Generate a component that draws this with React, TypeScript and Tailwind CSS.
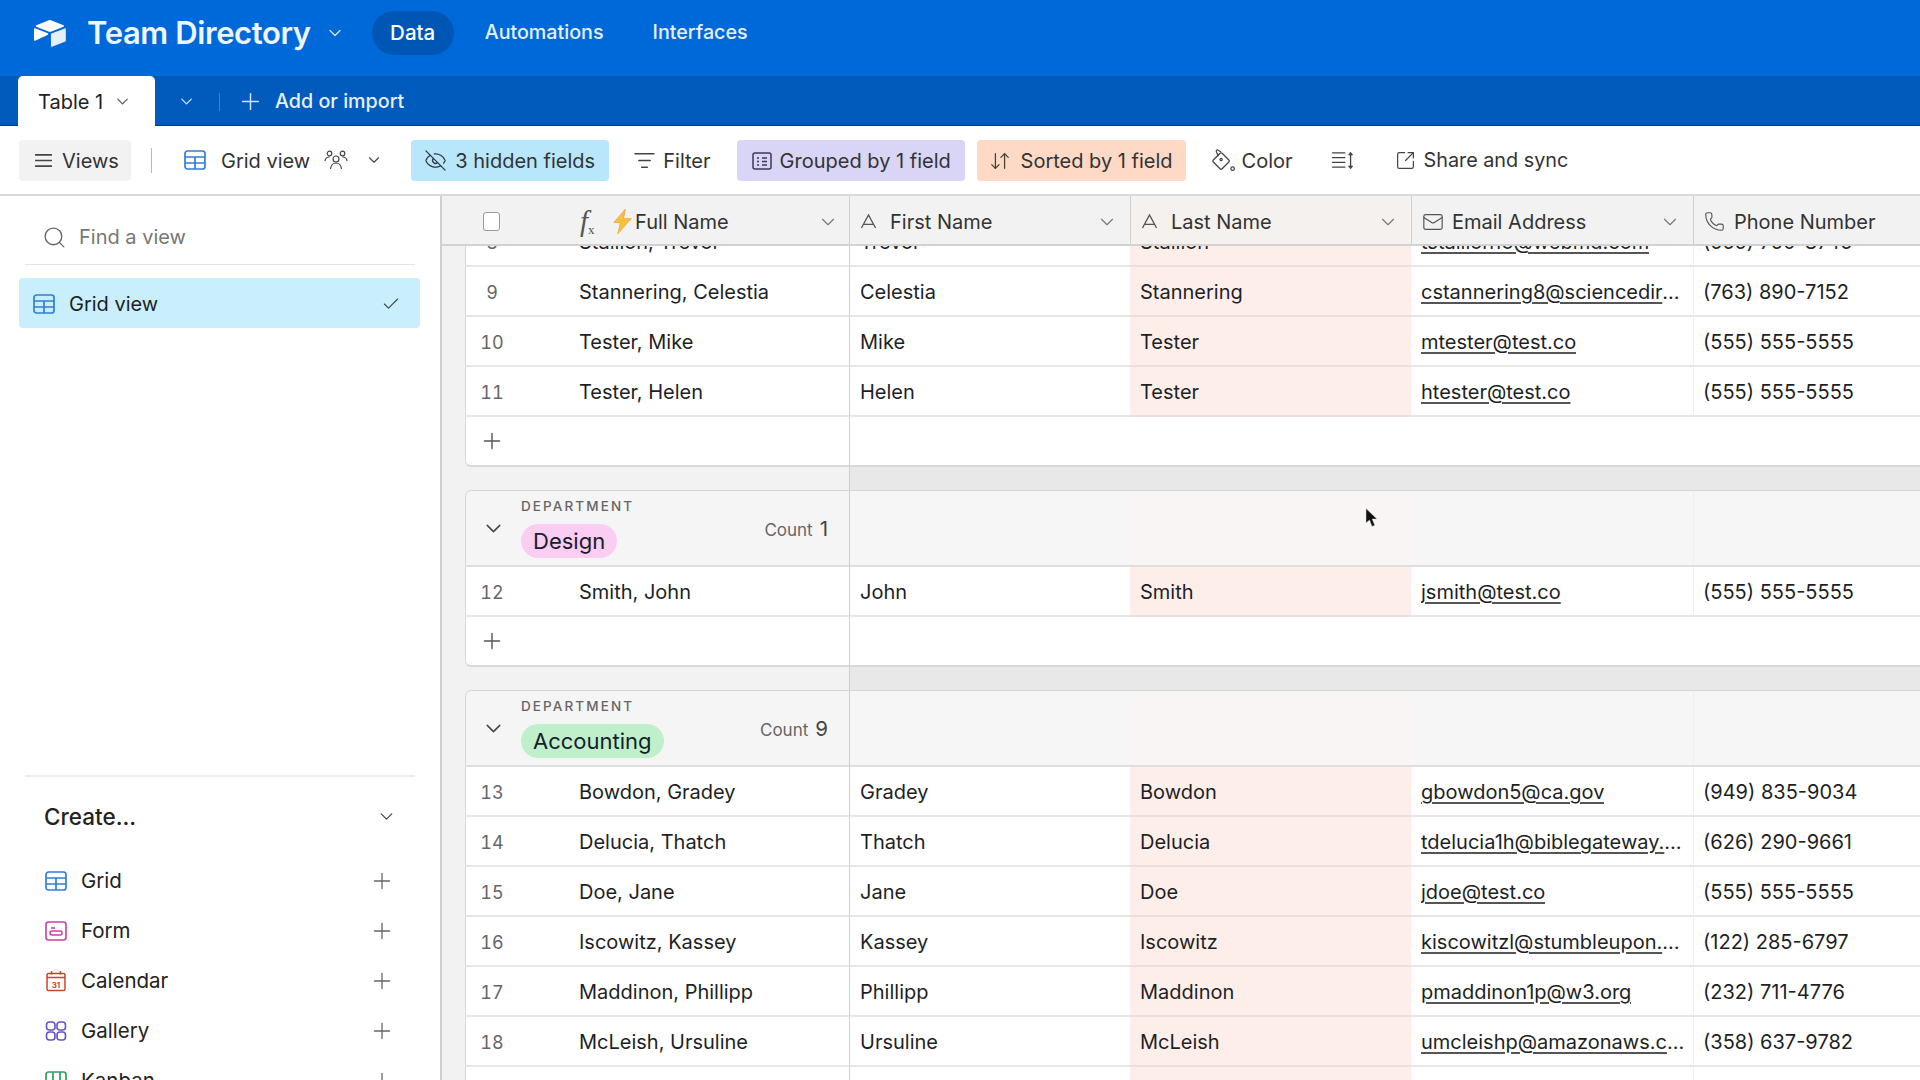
import React from "react";
import { ChevronDown, Search, Check, Plus, Mail, Phone, ArrowDownUp, SquareArrowOutUpRight, ListFilter, EyeOff } from "lucide-react";

const Logo = () => (
  <svg viewBox="0 0 200 170" className="w-[36px] h-[31px]" fill="#fff">
    <path d="M90.039 12.368 24.079 39.66c-3.667 1.519-3.63 6.729.062 8.192l66.235 26.266a24.58 24.58 0 0 0 18.12 0l66.236-26.266c3.69-1.463 3.729-6.673.062-8.192l-65.96-27.292a24.58 24.58 0 0 0-18.795 0" />
    <path d="M105.312 88.46v65.617c0 3.12 3.147 5.258 6.048 4.108l73.806-28.648a4.42 4.42 0 0 0 2.79-4.108V60.813c0-3.121-3.147-5.258-6.048-4.108l-73.806 28.648a4.42 4.42 0 0 0-2.79 4.108" fillOpacity="0.9" />
    <path d="M88.078 91.846l-21.904 10.576-2.224 1.075-46.238 22.155c-2.93 1.414-6.672-.722-6.672-3.978V60.088c0-1.178.604-2.195 1.414-2.96a5 5 0 0 1 1.12-.84c1.104-.663 2.68-.84 4.02-.31l70.117 27.78c3.564 1.414 3.844 6.408.368 8.087" />
  </svg>
);

const GridIcon = ({ className = "w-[22px] h-[20px]", color = "#2f7fd6" }: { className?: string; color?: string }) => (
  <svg viewBox="0 0 22 20" className={className} fill="none" stroke={color} strokeWidth="1.7">
    <rect x="1" y="1" width="20" height="18" rx="2.5" />
    <path d="M1 7h20M1 13h20M11 7v12" />
  </svg>
);

const FormIcon = () => (
  <svg viewBox="0 0 22 20" className="w-[22px] h-[20px]" fill="none" stroke="#cf3f9f" strokeWidth="1.6">
    <rect x="1" y="1" width="20" height="18" rx="2.5" />
    <path d="M6 7h4" />
    <rect x="5" y="10" width="12" height="4" rx="2" />
  </svg>
);

const CalendarIcon = () => (
  <svg viewBox="0 0 22 22" className="w-[22px] h-[22px]" fill="none" stroke="#c9442e" strokeWidth="1.5">
    <rect x="2" y="3.5" width="18" height="17" rx="1.5" />
    <path d="M2 7.5h18M6.5 1v3.5M15.5 1v3.5" />
    <text x="11" y="17.5" fontSize="8" fontWeight="700" textAnchor="middle" fill="#c9442e" stroke="none" fontFamily="Inter, sans-serif">31</text>
  </svg>
);

const GalleryIcon = () => (
  <svg viewBox="0 0 22 20" className="w-[22px] h-[20px]" fill="none" stroke="#6a4fc9" strokeWidth="1.6">
    <rect x="1.5" y="1" width="8.5" height="8" rx="3" />
    <rect x="12" y="1" width="8.5" height="8" rx="3" />
    <rect x="1.5" y="11" width="8.5" height="8" rx="3" />
    <rect x="12" y="11" width="8.5" height="8" rx="3" />
  </svg>
);

const KanbanIcon = () => (
  <svg viewBox="0 0 22 20" className="w-[22px] h-[20px]" fill="none" stroke="#2f9e5a" strokeWidth="1.7">
    <rect x="1" y="1" width="20" height="18" rx="2.5" />
    <path d="M8 1v10a2 2 0 0 1-4 0M15 1v8" />
  </svg>
);

const MenuIcon = () => (
  <svg viewBox="0 0 20 16" className="w-[19px] h-[15px]" fill="none" stroke="#444" strokeWidth="1.7">
    <path d="M1 2h18M1 8h18M1 14h18" />
  </svg>
);

const PeopleIcon = () => (
  <svg viewBox="0 0 24 22" className="w-[24px] h-[22px]" fill="none" stroke="#444" strokeWidth="1.2">
    <circle cx="12" cy="10" r="3" />
    <path d="M6.5 20c.5-4 2.5-6 5.5-6s5 2 5.500 6" />
    <circle cx="5.500" cy="4.500" r="2.300" />
    <circle cx="18.500" cy="4.500" r="2.300" />
    <path d="M1 12c.3-2.500 2-4 4.500-4M23 12c-.3-2.500-2-4-4.500-4" />
  </svg>
);

const GroupIcon = () => (
  <svg viewBox="0 0 20 18" className="w-[20px] h-[18px]" fill="none" stroke="#3c3a55" strokeWidth="1.5">
    <rect x="1" y="1" width="18" height="16" rx="2" />
    <path d="M5 6h2M10 6h5M5 9.500h2M10 9.500h5M5 13h2M10 13h5" />
  </svg>
);

const RowHeightIcon = () => (
  <svg viewBox="0 0 24 20" className="w-[23px] h-[19px]" fill="none" stroke="#444" strokeWidth="1.4">
    <path d="M1 2h14M1 7h14M1 12h14M1 17h14M20.500 2v16M18.500 4.500l2-2.500 2 2.500M18.500 15.500l2 2.500 2-2.500" />
  </svg>
);

const ColorIcon = () => (
  <svg viewBox="0 0 26 24" className="w-[25px] h-[23px]" fill="none" stroke="#444" strokeWidth="1.3">
    <rect x="4" y="6" width="13" height="13" rx="1.500" transform="rotate(45 10.500 12.500)" />
    <path d="M7.500 7.500 5.500 2.500c-.3-1 .6-1.800 1.500-1.400l3.500 2" />
    <circle cx="10.500" cy="11" r="1.200" />
    <circle cx="22.500" cy="20.500" r="1.800" />
  </svg>
);

const TextFieldIcon = () => (
  <svg viewBox="0 0 18 16" className="w-[17px] h-[15px]" fill="none" stroke="#555" strokeWidth="1.4">
    <path d="M1.500 15 9 1l7.500 14M4 11h10" />
  </svg>
);

const Bolt = () => (
  <svg viewBox="0 0 20 26" className="w-[19px] h-[25px]">
    <path d="M13 0 1 14h7L5 26 19 10h-8z" fill="#f6c33b" stroke="#ef9a3c" strokeWidth="0.8" />
  </svg>
);

const Cursor = () => (
  <svg viewBox="0 0 13 20" className="w-[13px] h-[20px]">
    <path d="M1 0.500V15l3.500-3 2.500 6.500 2.800-1.200L7.200 11H12z" fill="#111" stroke="#ddd" strokeWidth="0.5" />
  </svg>
);

const TopBar = () => (
  <div className="h-[76px] shrink-0 bg-[#0069d9] flex items-center pl-[32px] pb-[10px] text-white">
    <Logo />
    <span className="ml-[19px] text-[31px] font-semibold tracking-[-0.4px] text-[#eef5ff]">Team Directory</span>
    <ChevronDown className="ml-[14px] w-[20px] h-[20px] text-[#cfe3fa]" strokeWidth={1.6} />
    <div className="ml-[27px] w-[82px] h-[44px] rounded-full bg-[#0056b4] flex items-center justify-center text-[20.500px] font-medium">Data</div>
    <span className="ml-[31px] text-[19.700px] font-medium text-[#e6f0fc]">Automations</span>
    <span className="ml-[49px] text-[19.700px] font-medium text-[#e6f0fc]">Interfaces</span>
  </div>
);

const TabBar = () => (
  <div className="h-[50px] shrink-0 bg-[#005bbd] border-b border-[#00388a] flex items-stretch pl-[18px] text-white">
    <div className="w-[137px] h-[50px] bg-white rounded-t-[5px] flex items-center pl-[20px] pt-[1px] text-[#222] text-[20px]">
      <span>Table 1</span>
      <ChevronDown className="ml-[10px] w-[19px] h-[19px] text-[#555]" strokeWidth={1.5} />
    </div>
    <div className="flex items-center pt-[2px]">
      <ChevronDown className="ml-[22px] w-[19px] h-[19px] text-[#d4e6fa]" strokeWidth={1.6} />
      <div className="ml-[23px] w-px h-[18px] bg-[#3d82cf]" />
      <Plus className="ml-[17px] w-[27px] h-[27px] text-[#cfe3fa]" strokeWidth={1.3} />
      <span className="ml-[11px] text-[19.700px] font-medium text-[#e6f0fc]">Add or import</span>
    </div>
  </div>
);

const Toolbar = () => (
  <div className="h-[70px] shrink-0 bg-white border-b-2 border-[#d8d8d8] flex items-center pl-[19px] text-[20px] text-[#333]">
    <div className="w-[112px] h-[41px] bg-[#f2f2f2] rounded-[4px] flex items-center pl-[15px] pt-[1px]">
      <MenuIcon />
      <span className="ml-[9px]">Views</span>
    </div>
    <div className="ml-[20px] w-[1px] h-[25px] bg-[#bbb]" />
    <div className="ml-[32px]"><GridIcon /></div>
    <span className="ml-[15px] pt-[1px]">Grid view</span>
    <div className="ml-[14px]"><PeopleIcon /></div>
    <ChevronDown className="ml-[17px] w-[18px] h-[18px] text-[#444]" strokeWidth={1.5} />
    <div className="ml-[28px] w-[198px] h-[41px] bg-[#b8e6fb] rounded-[4px] flex items-center pl-[13px] pt-[1px]">
      <EyeOff className="w-[23px] h-[23px] text-[#334]" strokeWidth={1.3} />
      <span className="ml-[8px]">3 hidden fields</span>
    </div>
    <ListFilter className="ml-[24px] w-[23px] h-[23px] text-[#444]" strokeWidth={1.4} />
    <span className="ml-[7px] pt-[1px]">Filter</span>
    <div className="ml-[26px] w-[228px] h-[41px] bg-[#d9d5f7] rounded-[4px] flex items-center pl-[15px] pt-[1px]">
      <GroupIcon />
      <span className="ml-[8px]">Grouped by 1 field</span>
    </div>
    <div className="ml-[12px] w-[209px] h-[41px] bg-[#fdd9c6] rounded-[4px] flex items-center pl-[12px] pt-[1px]">
      <ArrowDownUp className="w-[22px] h-[22px] text-[#443]" strokeWidth={1.4} />
      <span className="ml-[10px]">Sorted by 1 field</span>
    </div>
    <div className="ml-[25px]"><ColorIcon /></div>
    <span className="ml-[6px] pt-[1px]">Color</span>
    <div className="ml-[38px]"><RowHeightIcon /></div>
    <SquareArrowOutUpRight className="ml-[41px] w-[21px] h-[21px] text-[#444]" strokeWidth={1.4} />
    <span className="ml-[8px] pt-[1px] text-[19.800px]">Share and sync</span>
  </div>
);

const createItems: { label: string; icon: React.ReactNode }[] = [
  { label: "Grid", icon: <GridIcon /> },
  { label: "Form", icon: <FormIcon /> },
  { label: "Calendar", icon: <CalendarIcon /> },
  { label: "Gallery", icon: <GalleryIcon /> },
  { label: "Kanban", icon: <KanbanIcon /> },
];

const Sidebar = () => (
  <div className="w-[442px] shrink-0 bg-white border-r-2 border-[#cfcfcf] flex flex-col overflow-hidden">
    <div className="h-[69px] shrink-0 mx-[25px] border-b border-[#e4e4e4] flex items-center pl-[17px] pt-[14px]">
      <Search className="w-[25px] h-[25px] text-[#666]" strokeWidth={1.3} />
      <span className="ml-[12px] text-[20px] text-[#777]">Find a view</span>
    </div>
    <div className="mt-[13px] ml-[19px] w-[401px] h-[50px] shrink-0 bg-[#c9eefc] rounded-[4px] flex items-center pl-[14px] pt-[1px]">
      <GridIcon />
      <span className="ml-[14px] text-[20px] text-[#1d1f25]">Grid view</span>
      <Check className="ml-auto mr-[19px] w-[20px] h-[20px] text-[#444]" strokeWidth={1.3} />
    </div>
    <div className="mt-[447px] mx-[25px] shrink-0 h-[2px] bg-[#ececec]" />
    <div className="h-[79px] shrink-0 flex items-center pl-[44px] pr-[43px]">
      <span className="text-[22.500px] font-medium text-[#222]">Create...</span>
      <ChevronDown className="ml-auto w-[21px] h-[21px] text-[#444]" strokeWidth={1.4} />
    </div>
    <div className="flex flex-col">
      {createItems.map((it) => (
        <div key={it.label} className="h-[50px] shrink-0 flex items-center pl-[45px] pr-[45px]">
          <div className="w-[22px] flex justify-center">{it.icon}</div>
          <span className="ml-[14px] text-[20.500px] text-[#222]">{it.label}</span>
          <Plus className="ml-auto w-[26px] h-[26px] text-[#666]" strokeWidth={1.2} />
        </div>
      ))}
    </div>
  </div>
);

const HeaderCol = ({ icon, label, chevron = true, className = "" }: { icon: React.ReactNode; label: string; chevron?: boolean; className?: string }) => (
  <div className={`h-full shrink-0 flex items-center pt-[3px] border-l border-[#cfcfcf] ${className}`}>
    <div className="w-[40px] pl-[10px] flex items-center">{icon}</div>
    <span className="text-[20px] text-[#333]">{label}</span>
    {chevron && <ChevronDown className="ml-auto mr-[12px] w-[22px] h-[22px] text-[#777]" strokeWidth={1.2} />}
  </div>
);

const GridHeader = () => (
  <div className="h-[50px] shrink-0 flex bg-[#f2f2f2] border-b-2 border-[#d2d2d2]">
    <div className="w-[407px] shrink-0 flex items-center pl-[41px] pt-[3px]">
      <div className="w-[17px] h-[19px] bg-white border border-[#999] rounded-[3px]" />
      <span className="ml-[80px] w-[24px] font-['Liberation_Serif',serif] italic text-[29px] leading-none text-[#555]">f<sub className="text-[13px] not-italic">x</sub></span>
      <div className="ml-[9px]"><Bolt /></div>
      <span className="ml-[3px] text-[20px] text-[#333]">Full Name</span>
      <ChevronDown className="ml-auto mr-[10px] w-[22px] h-[22px] text-[#777]" strokeWidth={1.2} />
    </div>
    <HeaderCol className="w-[281px]" icon={<TextFieldIcon />} label="First Name" />
    <HeaderCol className="w-[281px] bg-[#f5f1ef]" icon={<TextFieldIcon />} label="Last Name" />
    <HeaderCol className="w-[282px]" icon={<Mail className="w-[22px] h-[22px] text-[#555]" strokeWidth={1.3} />} label="Email Address" />
    <HeaderCol className="w-[300px]" icon={<Phone className="w-[21px] h-[21px] text-[#555]" strokeWidth={1.3} />} label="Phone Number" chevron={false} />
  </div>
);

type RowData = { n?: number; full?: string; first?: string; last?: string; email?: string; phone?: string };

const Row = ({ n, full, first, last, email, phone, className = "" }: RowData & { className?: string }) => (
  <div className={`h-[50px] shrink-0 flex text-[20px] text-[#1d1f25] ${className}`}>
    <div className="w-[384px] shrink-0 flex items-center pt-[2px] bg-white border-b-2 border-b-[#e6e6e6] border-l border-l-[#d8d8d8]">
      <span className="w-[52px] text-center text-[18px] tabular-nums text-[#666]">{n}</span>
      <span className="ml-[61px]">{full}</span>
    </div>
    <div className="w-[281px] shrink-0 flex items-center pl-[10px] pt-[2px] bg-white border-b-2 border-b-[#e6e6e6] border-l border-l-[#cfcfcf]">{first}</div>
    <div className="w-[281px] shrink-0 flex items-center pl-[10px] pt-[2px] bg-[#fdeeea] border-b-2 border-b-[#eadfdc]">{last}</div>
    <div className="w-[282px] shrink-0 flex items-center pl-[10px] pt-[2px] bg-white border-b-2 border-b-[#e6e6e6] overflow-hidden">
      <span className="truncate max-w-[266px] underline underline-offset-[3px] decoration-[#555]">{email}</span>
    </div>
    <div className="flex-1 flex items-center pl-[9px] pt-[1px] bg-white border-b-2 border-b-[#e6e6e6] border-l border-l-[#f0f0f0]">{phone}</div>
  </div>
);

const AddRow = () => (
  <div className="h-[50px] shrink-0 flex">
    <div className="w-[384px] shrink-0 flex items-center bg-white border-b-2 border-b-[#d8d8d8] border-l border-l-[#d8d8d8] rounded-bl-[6px]">
      <div className="w-[52px] flex justify-center"><Plus className="w-[26px] h-[26px] text-[#555]" strokeWidth={1.3} /></div>
    </div>
    <div className="flex-1 bg-white border-b-2 border-b-[#d8d8d8] border-l border-l-[#cfcfcf]" />
  </div>
);

const Gap = () => (
  <div className="h-[23px] shrink-0 flex">
    <div className="w-[384px] shrink-0" />
    <div className="flex-1 bg-[#e8e8e8] border-l border-l-[#cfcfcf]" />
  </div>
);

const GroupHeader = ({ name, count, badge }: { name: string; count: number; badge: string }) => (
  <div className="h-[77px] shrink-0 flex">
    <div className="w-[384px] shrink-0 flex bg-[#f5f5f5] border-t border-t-[#d4d4d4] border-b-2 border-b-[#dedede] border-l border-l-[#d8d8d8] rounded-tl-[6px]">
      <div className="w-[55px] flex justify-center items-center pt-[1px]">
        <ChevronDown className="w-[25px] h-[25px] text-[#444]" strokeWidth={1.4} />
      </div>
      <div className="flex flex-col pt-[7px]">
        <span className="text-[13.500px] leading-[16px] font-medium tracking-[2.100px] text-[#666]">DEPARTMENT</span>
        <span className={`mt-[10px] h-[34px] px-[12px] rounded-full flex items-center self-start text-[22px] text-[#15202b] ${badge}`}>{name}</span>
      </div>
      <div className="ml-auto mr-[21px] flex items-baseline self-start mt-[23px]">
        <span className="text-[17px] text-[#666]">Count</span>
        <span className="ml-[7px] text-[20.500px] text-[#444]">{count}</span>
      </div>
    </div>
    <div className="w-[281px] shrink-0 bg-[#f6f6f6] border-t border-t-[#d4d4d4] border-b-2 border-b-[#dedede] border-l border-l-[#cfcfcf]" />
    <div className="w-[281px] shrink-0 bg-[#f8f5f4] border-t border-t-[#d4d4d4] border-b-2 border-b-[#dedede]" />
    <div className="w-[282px] shrink-0 bg-[#f6f6f6] border-t border-t-[#d4d4d4] border-b-2 border-b-[#dedede]" />
    <div className="flex-1 bg-[#f6f6f6] border-t border-t-[#d4d4d4] border-b-2 border-b-[#dedede] border-l border-l-[#eeeeee]" />
  </div>
);

const groupA: RowData[] = [
  { n: 9, full: "Stannering, Celestia", first: "Celestia", last: "Stannering", email: "cstannering8@sciencedirect.com", phone: "(763) 890-7152" },
  { n: 10, full: "Tester, Mike", first: "Mike", last: "Tester", email: "mtester@test.co", phone: "(555) 555-5555" },
  { n: 11, full: "Tester, Helen", first: "Helen", last: "Tester", email: "htester@test.co", phone: "(555) 555-5555" },
];

const groupC: RowData[] = [
  { n: 13, full: "Bowdon, Gradey", first: "Gradey", last: "Bowdon", email: "gbowdon5@ca.gov", phone: "(949) 835-9034" },
  { n: 14, full: "Delucia, Thatch", first: "Thatch", last: "Delucia", email: "tdelucia1h@biblegateway.com", phone: "(626) 290-9661" },
  { n: 15, full: "Doe, Jane", first: "Jane", last: "Doe", email: "jdoe@test.co", phone: "(555) 555-5555" },
  { n: 16, full: "Iscowitz, Kassey", first: "Kassey", last: "Iscowitz", email: "kiscowitzl@stumbleupon.com", phone: "(122) 285-6797" },
  { n: 17, full: "Maddinon, Phillipp", first: "Phillipp", last: "Maddinon", email: "pmaddinon1p@w3.org", phone: "(232) 711-4776" },
  { n: 18, full: "McLeish, Ursuline", first: "Ursuline", last: "McLeish", email: "umcleishp@amazonaws.com", phone: "(358) 637-9782" },
];

const GridBody = () => (
  <div className="flex-1 min-h-0 overflow-hidden pl-[23px]">
    <div className="flex flex-col">
      <Row className="-mt-[29px]" n={8} full="Stallion, Trevor" first="Trevor" last="Stallion" email="tstallion1o@webmd.com" phone="(555) 750-8745" />
      {groupA.map((r) => <Row key={r.n} {...r} />)}
      <AddRow />
      <Gap />
      <GroupHeader name="Design" count={1} badge="bg-[#fbcdf2]" />
      <Row n={12} full="Smith, John" first="John" last="Smith" email="jsmith@test.co" phone="(555) 555-5555" />
      <AddRow />
      <Gap />
      <GroupHeader name="Accounting" count={9} badge="bg-[#bff0cb]" />
      {groupC.map((r) => <Row key={r.n} {...r} />)}
      <Row />
    </div>
  </div>
);

export default function App() {
  return (
    <div className="relative w-[1920px] h-[1080px] overflow-hidden flex flex-col bg-white font-['Inter',sans-serif]">
      <TopBar />
      <TabBar />
      <Toolbar />
      <div className="flex-1 min-h-0 flex">
        <Sidebar />
        <div className="flex-1 min-w-0 flex flex-col bg-[#f2f2f2]">
          <GridHeader />
          <GridBody />
        </div>
      </div>
      <div className="absolute left-[1365px] top-[508px]"><Cursor /></div>
    </div>
  );
}
